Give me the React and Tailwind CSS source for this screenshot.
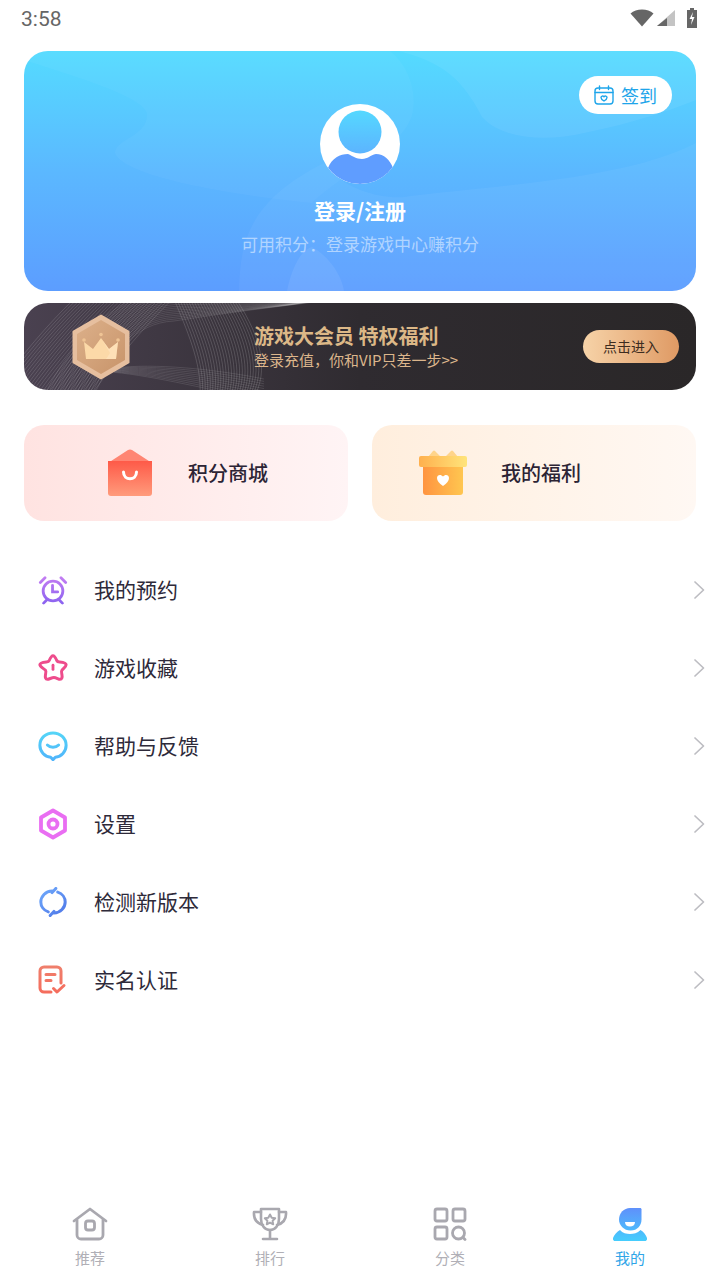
import React from "react";

const cjk = { fontFamily: '"Noto Sans CJK SC", "Noto Sans", sans-serif' };

function StatusIcons() {
  return (
    <div className="flex items-center">
      <svg width="24" height="18" viewBox="0 0 24 18"><path d="M0.500 4.500C3.500 1.800 7.500 .5 12 .5s8.500 1.300 11.500 4L12 17.500z" fill="#666" /></svg>
      <svg width="20" height="18" viewBox="0 0 20 18" className="ml-[2px]"><path d="M19 1v16H1z" fill="#c4c4c4" /><path d="M11 9v8H1z" fill="#666" /></svg>
      <svg width="12" height="20" viewBox="0 0 12 20" className="ml-[10px]"><path d="M4 0h4v2h3v18H1V2h3z" fill="#666" /><path d="M7 4 3.500 11H6l-1 6 3.500-8H6z" fill="#fff" /></svg>
    </div>
  );
}

function HeroArt() {
  return (
    <svg className="absolute inset-0" width="672" height="240" viewBox="0 0 672 240" fill="#fff">
      <path d="M0 9C50 25 118 45 123 62 125 85 91 88 91 102 100 125 200 143 288 152 320 120 385 95 389 59 392 40 385 15 366 0H0z" fillOpacity="0.035" />
      <path d="M375 0C410 10 435 20 458 66 480 90 526 90 560 82 610 72 650 58 672 49V0z" fillOpacity="0.06" />
      <path d="M215 240C216 190 225 150 300 112 320 140 360 148 380 146 450 136 600 130 672 92V240z" fillOpacity="0.045" />
      <path d="M263 240C268 215 278 198 288 196 305 205 318 225 320 240z" fillOpacity="0.07" />
    </svg>
  );
}

function Avatar() {
  return (
    <svg width="80" height="80" viewBox="0 0 80 80" className="block">
      <defs>
        <linearGradient id="hd" x1="0" y1="0" x2="0" y2="1">
          <stop offset="0" stopColor="#55d8ff" />
          <stop offset="1" stopColor="#5cb4ff" />
        </linearGradient>
        <clipPath id="av"><circle cx="40" cy="40" r="40" /></clipPath>
      </defs>
      <circle cx="40" cy="40" r="40" fill="#fff" />
      <circle cx="40" cy="28" r="21.500" fill="url(#hd)" />
      <path d="M8 64C12 54 20 50 28 50 33 52 36 55 42 55 48 55 50 51 56 50 64 50 70 56 73 64 66 74 54 80 40 80 27 80 16 74 8 64z" fill="#5f9dff" clipPath="url(#av)" />
    </svg>
  );
}

function BannerLines() {
  const a = [];
  for (let i = 0; i < 30; i++) {
    const d = i * 3.4;
    a.push(`M${-30 + d} 90C${-5 + d} 55 ${25 + d} 20 ${50 + d} -4`);
  }
  const b = [];
  for (let i = 0; i < 24; i++) {
    const d = i * 3;
    b.push(`M${150 + d * 0.9} -4C${162 + d} 25 ${178 + d} 60 ${176 + d * 0.8} 92`);
  }
  const c = [];
  for (let i = 0; i < 20; i++) {
    const d = i * 2.6;
    c.push(`M${70 - d} 92C${90 - d} 50 ${110 - d * 0.5} ${20 - d * 0.6} 150 ${18 - d * 0.7} ${200 + d * 0.6} ${10 - d * 0.4} ${250 + d} ${4 + d * 0.1} 300 ${-2 - d * 0.2}`);
  }
  const e = [];
  for (let i = 0; i < 10; i++) {
    const d = i * 2.4;
    e.push(`M90 ${65 + d * 0.2}C130 ${60 + d * 0.6} 190 ${66 + d} 240 ${76 + d}`);
  }
  return (
    <svg className="absolute inset-0" width="672" height="87" viewBox="0 0 672 87" fill="none" stroke="#fff">
      {a.map((d, i) => <path key={i} d={d} strokeOpacity="0.2" strokeWidth="0.7" />)}
      {b.map((d, i) => <path key={i} d={d} strokeOpacity="0.22" strokeWidth="0.7" />)}
      {c.map((d, i) => <path key={i} d={d} strokeOpacity="0.16" strokeWidth="0.7" />)}
      {e.map((d, i) => <path key={i} d={d} strokeOpacity="0.16" strokeWidth="0.7" />)}
    </svg>
  );
}

function Medal() {
  return (
    <svg width="60" height="66" viewBox="0 0 60 66" className="block relative">
      <defs>
        <linearGradient id="m2" x1="0" y1="0" x2="1" y2="1">
          <stop offset="0" stopColor="#dcb08a" />
          <stop offset="1" stopColor="#c8946a" />
        </linearGradient>
      </defs>
      <path d="M30 1.500 57.500 17.500V48.500L30 64.500 2.500 48.500V17.500z" fill="#e6bf9f" stroke="#e6bf9f" strokeLinejoin="round" strokeWidth="2" />
      <path d="M30 6 54 20V46L30 60 6 46V20z" fill="url(#m2)" />
      <path d="M13 28 22 35 30 24 38 35 47 28 45 45H15z" fill="#fcd9a8" />
      <path d="M30 24 38 35 47 28 45 45H35l4-6z" fill="#ffe5c2" opacity="0.55" />
      <circle cx="13" cy="26" r="1.800" fill="#efc495" />
      <circle cx="30" cy="20.500" r="1.800" fill="#efc495" />
      <circle cx="47" cy="26" r="1.800" fill="#efc495" />
    </svg>
  );
}

function BagIcon() {
  return (
    <svg width="44" height="48" viewBox="0 0 44 48" className="block">
      <defs>
        <linearGradient id="bag" x1="0" y1="0" x2="0" y2="1">
          <stop offset="0" stopColor="#fe5a48" />
          <stop offset="1" stopColor="#ff9b7c" />
        </linearGradient>
      </defs>
      <path d="M20 1c1.200-.8 2.800-.8 4 0l20 13H0z" fill="#ff8573" />
      <path d="M0 12h44v32a3 3 0 0 1-3 3H3a3 3 0 0 1-3-3z" fill="url(#bag)" />
      <path d="M15.500 23c0 9 13 9 13 0" fill="none" stroke="#fff" strokeWidth="3" strokeLinecap="round" />
    </svg>
  );
}

function GiftIcon() {
  return (
    <svg width="48" height="48" viewBox="0 0 48 48" className="block">
      <defs>
        <linearGradient id="gb" x1="0" y1="0" x2="1" y2="0">
          <stop offset="0" stopColor="#ff9440" />
          <stop offset="1" stopColor="#ffc650" />
        </linearGradient>
        <linearGradient id="gt" x1="0" y1="0" x2="1" y2="0">
          <stop offset="0" stopColor="#ffb04e" />
          <stop offset="1" stopColor="#ffe47a" />
        </linearGradient>
      </defs>
      <path d="M9 8 14 2c.6-.8 1.400-.8 2 0l6 6zM26 8l6-6c.6-.8 1.400-.8 2 0l5 6z" fill="#ffd48a" />
      <path d="M4 15h40v28a3 3 0 0 1-3 3H7a3 3 0 0 1-3-3z" fill="url(#gb)" />
      <path d="M2 7h44a2 2 0 0 1 2 2v7a2 2 0 0 1-2 2H2a2 2 0 0 1-2-2V9a2 2 0 0 1 2-2z" fill="url(#gt)" />
      <path d="M24 41c-4-3-6-5-6-8 0-3.500 4-4 6-1.500 2-2.500 6-2 6 1.500 0 3-2 5-6 8z" fill="#fff" transform="translate(0 -4)" />
    </svg>
  );
}

function AlarmIcon() {
  return (
    <svg width="30" height="30" viewBox="0 0 32 32" fill="none" stroke="url(#a1)" strokeWidth="3" strokeLinecap="round">
      <defs>
        <linearGradient id="a1" gradientUnits="userSpaceOnUse" x1="16" y1="1" x2="16" y2="31">
          <stop offset="0" stopColor="#c57ef2" />
          <stop offset="1" stopColor="#8a62f0" />
        </linearGradient>
      </defs>
      <circle cx="16" cy="17" r="10.500" />
      <path d="M15.500 11v7h5.500M2.500 8l5-5M29.500 8l-5-5M9 27 6 30M23 27l3 3" />
    </svg>
  );
}

function StarIcon() {
  return (
    <svg width="30" height="30" viewBox="0 0 32 32" fill="none" stroke="#ee4c8c" strokeWidth="3.200" strokeLinejoin="round" strokeLinecap="round">
      <path d="M16 3c1.500 0 2.500 1.500 4 5 .6 1.300 1.500 1.500 3 1.600 4 .4 7 .8 7 3 0 2-3 3.800-4.500 5.800-.8 1-.4 2.500 0 4.600.6 3 0 5-2 5-1.800 0-4-1.800-6.500-1.800s-5 1.800-7 1.800c-2 0-2.500-2-2-5 .4-2 .8-3.600 0-4.600C6 16.400 2 14.600 2 12.600c0-2.200 3-2.600 7-3 1.500-.1 2.500-.3 3-1.600C13.500 4.500 14.500 3 16 3z" />
      <path d="M16 13v4.500" strokeWidth="3" />
    </svg>
  );
}

function ChatIcon() {
  return (
    <svg width="30" height="30" viewBox="0 0 32 32" fill="none" stroke="url(#c1)" strokeWidth="3.200" strokeLinecap="round" strokeLinejoin="round">
      <defs>
        <linearGradient id="c1" gradientUnits="userSpaceOnUse" x1="16" y1="1" x2="16" y2="31">
          <stop offset="0" stopColor="#55d5f7" />
          <stop offset="1" stopColor="#4fb4fb" />
        </linearGradient>
      </defs>
      <path d="M16 2c7.700 0 14 5.800 14 13.200 0 7-5.200 12-11.500 12.800L16 30.500 13.500 28C7.200 27.200 2 22.200 2 15.200 2 7.800 8.300 2 16 2z" />
      <path d="M10 15c3 3 9 3 12 0" />
    </svg>
  );
}

function HexIcon() {
  return (
    <svg width="30" height="32" viewBox="0 0 30 32" fill="none" stroke="#e96ef2" strokeWidth="3.800" strokeLinejoin="round">
      <path d="M15 2.500 27 9.500v13L15 29.500 3 22.500v-13z" />
      <circle cx="15" cy="16" r="4.500" />
    </svg>
  );
}

function RefreshIcon() {
  return (
    <svg width="30" height="30" viewBox="0 0 32 32" fill="none" stroke="url(#r1)" strokeWidth="3.200" strokeLinecap="round" strokeLinejoin="round">
      <defs>
        <linearGradient id="r1" gradientUnits="userSpaceOnUse" x1="4" y1="2" x2="28" y2="30">
          <stop offset="0" stopColor="#6ea8fb" />
          <stop offset="1" stopColor="#4f78e8" />
        </linearGradient>
      </defs>
      <path d="M11 26.500C6 25 3 20.500 3 16 3 10 8 4.500 15 4.200" />
      <path d="M21 5.500C26 7 29 11.500 29 16c0 6-5 11.500-12 11.800" />
      <path d="M19 1.500 15 6M13 30.500 17 26" />
    </svg>
  );
}

function NoteIcon() {
  return (
    <svg width="30" height="30" viewBox="0 0 30 30" fill="none" stroke="url(#n1)" strokeWidth="3" strokeLinecap="round" strokeLinejoin="round">
      <defs>
        <linearGradient id="n1" gradientUnits="userSpaceOnUse" x1="15" y1="1" x2="15" y2="29">
          <stop offset="0" stopColor="#ef7f6c" />
          <stop offset="1" stopColor="#f56c5c" />
        </linearGradient>
      </defs>
      <path d="M13 27H6a4 4 0 0 1-4-4V6a4 4 0 0 1 4-4h13a4 4 0 0 1 4 4v12" />
      <path d="M8 9.500h9M8 15.500h5M15.500 23.500l3.500 3.500 7-6.500" />
    </svg>
  );
}

function Chevron() {
  return (
    <svg width="12" height="20" viewBox="0 0 12 20" fill="none" stroke="#bdbdc2" strokeWidth="1.700" strokeLinecap="round" strokeLinejoin="round">
      <path d="M2 2l8.500 8L2 18" />
    </svg>
  );
}

function HomeNav() {
  return (
    <svg width="36" height="34" viewBox="0 0 36 34" fill="none" stroke="#a9a8af" strokeWidth="2.800" strokeLinecap="round" strokeLinejoin="round">
      <path d="M2 14 18 2l16 12" />
      <path d="M5 13v15a4 4 0 0 0 4 4h18a4 4 0 0 0 4-4V13" />
      <rect x="13.500" y="14" width="9" height="9" rx="2.500" />
    </svg>
  );
}

function TrophyNav() {
  return (
    <svg width="36" height="34" viewBox="0 0 36 34" fill="none" stroke="#a9a8af" strokeWidth="2.600" strokeLinecap="round" strokeLinejoin="round">
      <path d="M9 2h18v10c0 6-3.500 11-9 11S9 18 9 12z" />
      <path d="M9 5H2c-.5 6 2 11 9 13M27 5h7c.5 6-2 11-9 13M18 23v8M11 32h14" />
      <path d="M18 7.500l1.700 3.300 3.500.5-2.600 2.500.6 3.500-3.200-1.700-3.200 1.700.6-3.500-2.600-2.500 3.500-.5z" strokeWidth="2" />
    </svg>
  );
}

function GridNav() {
  return (
    <svg width="34" height="34" viewBox="0 0 34 34" fill="none" stroke="#a9a8af" strokeWidth="2.800" strokeLinecap="round" strokeLinejoin="round">
      <rect x="2" y="2" width="12" height="12" rx="2" />
      <rect x="20" y="2" width="12" height="12" rx="2" />
      <rect x="2" y="20" width="12" height="12" rx="2" />
      <circle cx="25.500" cy="26" r="6" />
      <path d="M30 30.500l2 2" />
    </svg>
  );
}

function UserNav() {
  return (
    <svg width="34" height="33" viewBox="0 0 34 33">
      <defs>
        <linearGradient id="u1" gradientUnits="userSpaceOnUse" x1="17" y1="0" x2="17" y2="33">
          <stop offset="0" stopColor="#5f90fb" />
          <stop offset="1" stopColor="#45cdfd" />
        </linearGradient>
      </defs>
      <path d="M17 0h10c1 0 1.500.6 1.500 1.500v10c0 6-4 11-11 11-6.500 0-11.500-5-11.500-11C6 5 11 0 17 0z" fill="url(#u1)" />
      <path d="M7 22c2.500 3 6.500 4 10 4s7.500-1 10.500-4c3 1.500 5.500 5 6.500 8 .4 1.500-.4 3-2 3H2c-1.600 0-2.400-1.500-2-3 1-3 4-6.500 7-8z" fill="url(#u1)" />
      <path d="M12 14h10c0 3-2.200 4.500-5 4.500S12 17 12 14z" fill="#fff" />
    </svg>
  );
}

function CalIcon() {
  return (
    <svg width="20" height="20" viewBox="0 0 20 20" fill="none" stroke="#1ea5ea" strokeWidth="1.400" strokeLinecap="round" strokeLinejoin="round">
      <rect x="1" y="3" width="18" height="16" rx="3" />
      <path d="M1 7.500h18M5.500 1v3.500M14.500 1v3.500" />
      <path d="M10 16c-2-1.300-3-2.300-3-3.600 0-1.500 2-1.800 3-.7 1-1.100 3-.8 3 .7 0 1.300-1 2.300-3 3.600z" />
    </svg>
  );
}

const menu = [
  ["我的预约", AlarmIcon],
  ["游戏收藏", StarIcon],
  ["帮助与反馈", ChatIcon],
  ["设置", HexIcon],
  ["检测新版本", RefreshIcon],
  ["实名认证", NoteIcon],
];

const nav = [
  ["推荐", HomeNav, false],
  ["排行", TrophyNav, false],
  ["分类", GridNav, false],
  ["我的", UserNav, true],
];

export default function App() {
  return (
    <div className="w-[720px] h-[1280px] bg-white flex flex-col overflow-hidden" style={cjk}>
      <div className="h-[51px] shrink-0 flex items-start justify-between pl-[21px] pr-[22px] pt-[8px]">
        <span className="text-[21px] leading-[22px] text-[#666666] [font-family:Roboto,sans-serif]">3:58</span>
        <StatusIcons />
      </div>

      <div className="relative mx-[24px] h-[240px] shrink-0 rounded-[24px] overflow-hidden bg-gradient-to-b from-[#54dbff] via-[#5bb8ff] to-[#5c9dff] flex flex-col items-center">
        <HeroArt />
        <div className="absolute right-[24px] top-[25px] h-[38px] w-[93px] rounded-full bg-white flex items-center justify-center gap-[7px]">
          <CalIcon />
          <span className="text-[18px] leading-[24px] text-[#1ea5ea]">签到</span>
        </div>
        <div className="relative mt-[53px]"><Avatar /></div>
        <div className="relative mt-[10px] text-[21px] leading-[32px] font-bold text-white">登录/注册</div>
        <div className="relative mt-[5px] text-[17px] leading-[26px] text-white/50">{"可用积分\uFF1A登录游戏中心赚积分"}</div>
      </div>

      <div className="relative mx-[24px] mt-[12px] h-[87px] shrink-0 rounded-[24px] overflow-hidden bg-gradient-to-r from-[#4a4150] via-[#2f2b30] to-[#2a2728] flex items-center pl-[47px] pr-[17px]">
        <BannerLines />
        <Medal />
        <div className="relative ml-[123px] -mt-[2px] flex flex-col">
          <span className="text-[20px] leading-[28px] font-bold text-[#dcb887]">游戏大会员 特权福利</span>
          <span className="text-[15px] leading-[20px] text-[#dcb68c]">{"登录充值\uFF0C你和VIP只差一步>>"}</span>
        </div>
        <div className="relative ml-auto h-[33px] w-[96px] rounded-full bg-gradient-to-r from-[#f6d3a8] to-[#df9a64] flex items-center justify-center text-[14px] text-[#3d2c20]">点击进入</div>
      </div>

      <div className="mx-[24px] mt-[35px] grid grid-cols-2 gap-[24px] shrink-0">
        <div className="h-[96px] rounded-[20px] bg-gradient-to-r from-[#ffe3e1] to-[#fff4f5] flex items-center pl-[84px]">
          <BagIcon />
          <span className="ml-[36px] text-[20px] font-medium text-[#2c2435]">积分商城</span>
        </div>
        <div className="h-[96px] rounded-[20px] bg-gradient-to-r from-[#ffeedd] to-[#fff8f3] flex items-center pl-[47px]">
          <GiftIcon />
          <span className="ml-[34px] text-[20px] font-medium text-[#2c2435]">我的福利</span>
        </div>
      </div>

      <div className="mt-[30px] flex flex-col">
        {menu.map(([label, Icon]) => (
          <div key={label} className="h-[78px] flex items-center pl-[38px] pr-[15px]">
            <Icon />
            <span className="ml-[26px] text-[21px] text-[#2e2a3a]">{label}</span>
            <span className="ml-auto flex"><Chevron /></span>
          </div>
        ))}
      </div>

      <div className="mt-auto h-[73px] grid grid-cols-4 shrink-0">
        {nav.map(([label, Icon, active]) => (
          <div key={label} className="flex flex-col items-center">
            <div className="h-[34px] flex items-center justify-center"><Icon /></div>
            <span className={active ? "mt-[6px] text-[15px] leading-[22px] text-[#2fa5e8]" : "mt-[6px] text-[15px] leading-[22px] text-[#b0afb6]"}>{label}</span>
          </div>
        ))}
      </div>
    </div>
  );
}
